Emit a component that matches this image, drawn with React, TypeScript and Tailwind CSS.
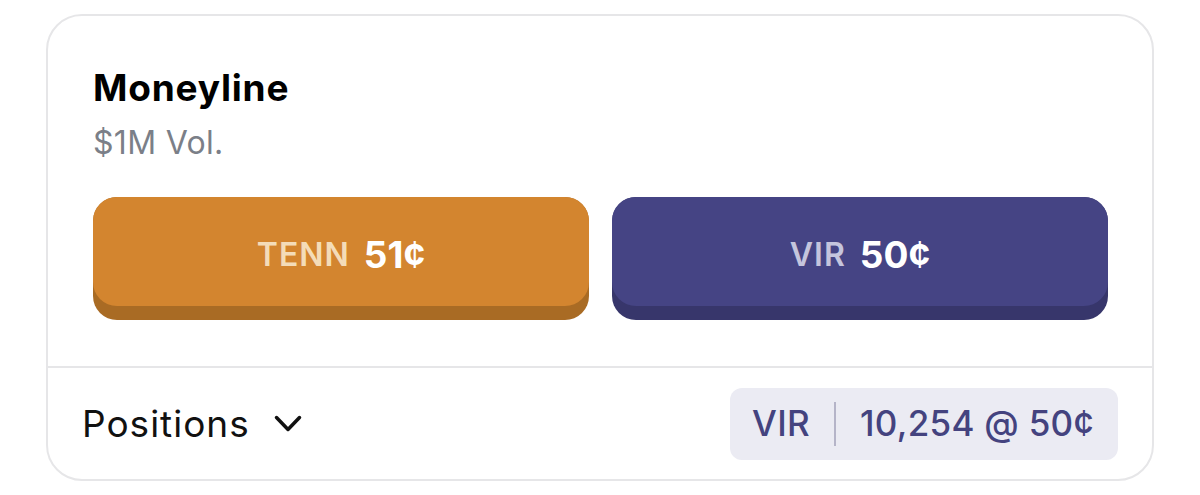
import React from "react";

export default function App() {
  return (
    <div className="w-[1200px] h-[495px] bg-white flex items-start justify-center pt-[14px]" style={{ fontFamily: "Inter, 'Noto Sans', sans-serif" }}>
      <div className="w-[1108px] h-[467px] border-2 border-[#e6e6e8] rounded-[36px] flex flex-col overflow-hidden">
        <div className="pl-[45px] pr-[44px] pt-[50px] h-[350px] flex flex-col">
          <div className="text-[37px] leading-[44px] font-bold text-black tracking-[0.8px]">Moneyline</div>
          <div className="text-[32px] leading-[38px] text-[#7b7f88] mt-[14px] tracking-[0.3px]">$1M Vol.</div>
          <div className="flex gap-[23px] mt-[35px]">
            <button className="flex-1 h-[123px] rounded-[24px] bg-[#a96b24] pb-[14px]">
              <div className="h-full rounded-[24px] bg-[#d3852f] flex items-center justify-center gap-[14px] pt-[6px]">
                <span className="text-[32px] font-semibold text-[#f4dcb8] tracking-[1px]">TENN</span>
                <span className="text-[37px] font-bold text-white">51¢</span>
              </div>
            </button>
            <button className="flex-1 h-[123px] rounded-[24px] bg-[#37366b] pb-[14px]">
              <div className="h-full rounded-[24px] bg-[#454484] flex items-center justify-center gap-[14px] pt-[6px]">
                <span className="text-[32px] font-semibold text-[#c5c5dd] tracking-[1px]">VIR</span>
                <span className="text-[37px] font-bold text-white">50¢</span>
              </div>
            </button>
          </div>
        </div>
        <div className="h-[2px] bg-[#e6e6e8]" />
        <div className="flex-1 flex items-center justify-between pl-[34px] pr-[34px]">
          <div className="flex items-center gap-[24px]">
            <span className="text-[37px] text-[#111] tracking-[1px]">Positions</span>
            <svg width="28" height="18" viewBox="0 0 28 18" fill="none">
              <path d="M2.5 2.5 L14 14.5 L25.5 2.5" stroke="#111" strokeWidth="3.5" strokeLinecap="round" strokeLinejoin="round" />
            </svg>
          </div>
          <div className="h-[72px] rounded-[12px] bg-[#ebebf3] flex items-center pl-[22px] pr-[24px] text-[35px] font-medium text-[#44437f] tracking-[0.3px]">
            <span>VIR</span>
            <span className="w-[2px] h-[44px] bg-[#b5b4c8] mx-[24px]" />
            <span>10,254 @ 50¢</span>
          </div>
        </div>
      </div>
    </div>
  );
}
